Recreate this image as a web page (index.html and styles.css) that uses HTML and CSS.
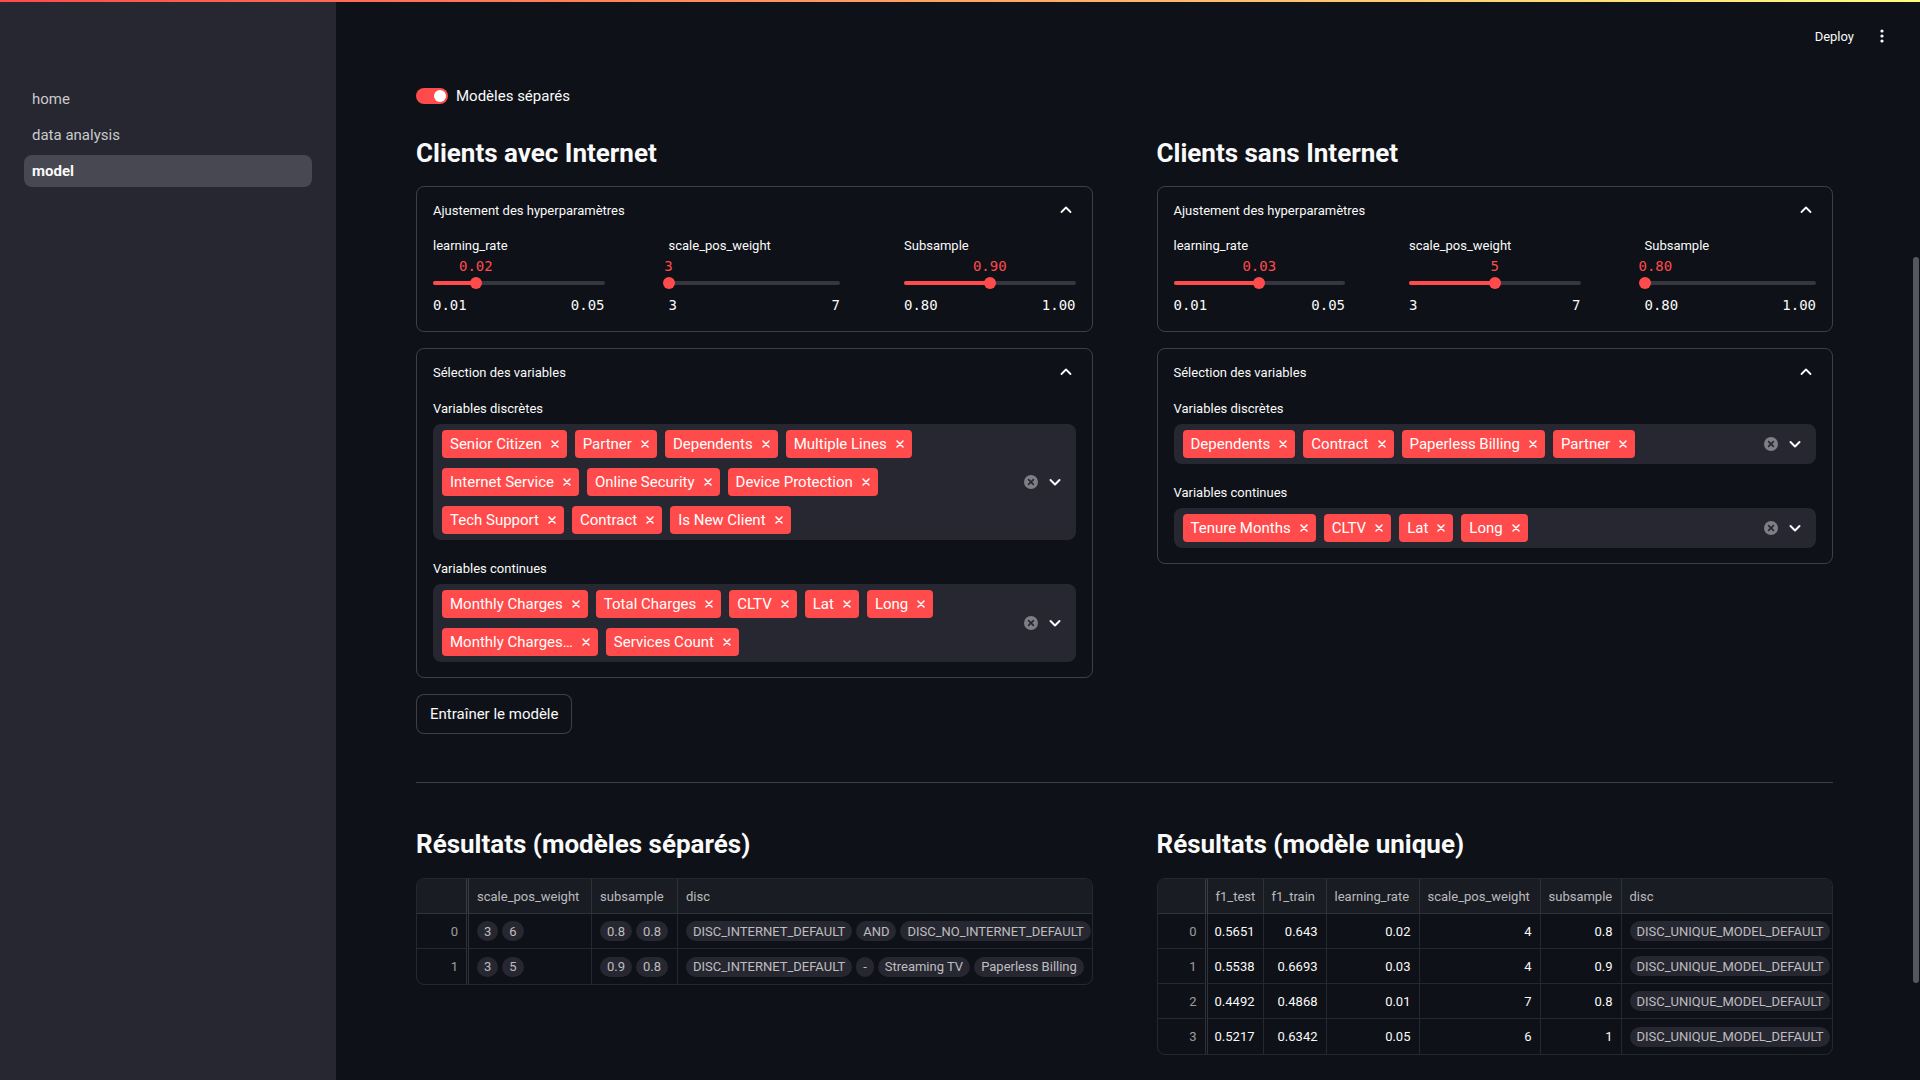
FILE: index.html
```html
<!DOCTYPE html>
<html lang="fr">
<head>
<meta charset="utf-8">
<title>model</title>
<link rel="stylesheet" href="styles.css">
</head>
<body>
<div class="decoration"></div>
<div class="app">
  <aside class="sidebar">
    <nav class="nav">
      <a class="nav-item">home</a>
      <a class="nav-item">data analysis</a>
      <a class="nav-item active">model</a>
    </nav>
  </aside>
  <main class="main">
    <header class="topbar">
      <span class="deploy">Deploy</span>
      <span class="kebab"><svg width="16" height="16" viewBox="0 0 16 16"><circle cx="8" cy="3" r="1.6" fill="#fafafa"/><circle cx="8" cy="8" r="1.6" fill="#fafafa"/><circle cx="8" cy="13" r="1.6" fill="#fafafa"/></svg></span>
    </header>
    <div class="content">
      <div class="toggle-row">
        <span class="toggle"><span class="knob"></span></span>
        <span class="toggle-label">Modèles séparés</span>
      </div>

      <div class="cols top-cols">
        <section class="col">
          <h3 class="subheader">Clients avec Internet</h3>
          <div class="expander">
            <div class="exp-head"><span>Ajustement des hyperparamètres</span><svg class="chev" width="20" height="20" viewBox="0 0 20 20"><polyline points="5.5,12 10,7.5 14.5,12" fill="none" stroke="#fafafa" stroke-width="1.8" stroke-linecap="round" stroke-linejoin="round"/></svg></div>
            <div class="exp-body sliders">
              <div class="slider">
                <div class="slider-label">learning_rate</div>
                <div class="rail">
                  <span class="val" style="left:25%">0.02</span>
                  <div class="track"><div class="fill" style="width:25%"></div></div>
                  <span class="thumb" style="left:25%"></span>
                </div>
                <div class="minmax"><span>0.01</span><span>0.05</span></div>
              </div>
              <div class="slider">
                <div class="slider-label">scale_pos_weight</div>
                <div class="rail">
                  <span class="val" style="left:0%">3</span>
                  <div class="track"><div class="fill" style="width:0%"></div></div>
                  <span class="thumb" style="left:0%"></span>
                </div>
                <div class="minmax"><span>3</span><span>7</span></div>
              </div>
              <div class="slider">
                <div class="slider-label">Subsample</div>
                <div class="rail">
                  <span class="val" style="left:50%">0.90</span>
                  <div class="track"><div class="fill" style="width:50%"></div></div>
                  <span class="thumb" style="left:50%"></span>
                </div>
                <div class="minmax"><span>0.80</span><span>1.00</span></div>
              </div>
            </div>
          </div>

          <div class="expander">
            <div class="exp-head"><span>Sélection des variables</span><svg class="chev" width="20" height="20" viewBox="0 0 20 20"><polyline points="5.5,12 10,7.5 14.5,12" fill="none" stroke="#fafafa" stroke-width="1.8" stroke-linecap="round" stroke-linejoin="round"/></svg></div>
            <div class="exp-body">
              <div class="field-label">Variables discrètes</div>
              <div class="multiselect">
                <div class="tags">
                  <span class="tag">Senior Citizen<svg class="x" viewBox="0 0 8 8"><path d="M1 1L7 7M7 1L1 7"/></svg></span>
                  <span class="tag">Partner<svg class="x" viewBox="0 0 8 8"><path d="M1 1L7 7M7 1L1 7"/></svg></span>
                  <span class="tag">Dependents<svg class="x" viewBox="0 0 8 8"><path d="M1 1L7 7M7 1L1 7"/></svg></span>
                  <span class="tag">Multiple Lines<svg class="x" viewBox="0 0 8 8"><path d="M1 1L7 7M7 1L1 7"/></svg></span>
                  <span class="tag">Internet Service<svg class="x" viewBox="0 0 8 8"><path d="M1 1L7 7M7 1L1 7"/></svg></span>
                  <span class="tag">Online Security<svg class="x" viewBox="0 0 8 8"><path d="M1 1L7 7M7 1L1 7"/></svg></span>
                  <span class="tag">Device Protection<svg class="x" viewBox="0 0 8 8"><path d="M1 1L7 7M7 1L1 7"/></svg></span>
                  <span class="tag">Tech Support<svg class="x" viewBox="0 0 8 8"><path d="M1 1L7 7M7 1L1 7"/></svg></span>
                  <span class="tag">Contract<svg class="x" viewBox="0 0 8 8"><path d="M1 1L7 7M7 1L1 7"/></svg></span>
                  <span class="tag">Is New Client<svg class="x" viewBox="0 0 8 8"><path d="M1 1L7 7M7 1L1 7"/></svg></span>
                </div>
                <div class="ms-icons">
                  <svg class="clear" viewBox="0 0 14 14"><circle cx="7" cy="7" r="7" fill="#7d7e86"/><path d="M4.6 4.6L9.4 9.4M9.4 4.6L4.6 9.4" stroke="#262730" stroke-width="1.6" stroke-linecap="round"/></svg>
                  <svg class="down" viewBox="0 0 14 14"><polyline points="2.5,5 7,9.5 11.5,5" fill="none" stroke="#fafafa" stroke-width="2" stroke-linecap="round" stroke-linejoin="round"/></svg>
                </div>
              </div>
              <div class="field-label second">Variables continues</div>
              <div class="multiselect">
                <div class="tags">
                  <span class="tag">Monthly Charges<svg class="x" viewBox="0 0 8 8"><path d="M1 1L7 7M7 1L1 7"/></svg></span>
                  <span class="tag">Total Charges<svg class="x" viewBox="0 0 8 8"><path d="M1 1L7 7M7 1L1 7"/></svg></span>
                  <span class="tag">CLTV<svg class="x" viewBox="0 0 8 8"><path d="M1 1L7 7M7 1L1 7"/></svg></span>
                  <span class="tag">Lat<svg class="x" viewBox="0 0 8 8"><path d="M1 1L7 7M7 1L1 7"/></svg></span>
                  <span class="tag">Long<svg class="x" viewBox="0 0 8 8"><path d="M1 1L7 7M7 1L1 7"/></svg></span>
                  <span class="tag">Monthly Charges…<svg class="x" viewBox="0 0 8 8"><path d="M1 1L7 7M7 1L1 7"/></svg></span>
                  <span class="tag">Services Count<svg class="x" viewBox="0 0 8 8"><path d="M1 1L7 7M7 1L1 7"/></svg></span>
                </div>
                <div class="ms-icons">
                  <svg class="clear" viewBox="0 0 14 14"><circle cx="7" cy="7" r="7" fill="#7d7e86"/><path d="M4.6 4.6L9.4 9.4M9.4 4.6L4.6 9.4" stroke="#262730" stroke-width="1.6" stroke-linecap="round"/></svg>
                  <svg class="down" viewBox="0 0 14 14"><polyline points="2.5,5 7,9.5 11.5,5" fill="none" stroke="#fafafa" stroke-width="2" stroke-linecap="round" stroke-linejoin="round"/></svg>
                </div>
              </div>
            </div>
          </div>
        </section>

        <section class="col">
          <h3 class="subheader">Clients sans Internet</h3>
          <div class="expander">
            <div class="exp-head"><span>Ajustement des hyperparamètres</span><svg class="chev" width="20" height="20" viewBox="0 0 20 20"><polyline points="5.5,12 10,7.5 14.5,12" fill="none" stroke="#fafafa" stroke-width="1.8" stroke-linecap="round" stroke-linejoin="round"/></svg></div>
            <div class="exp-body sliders">
              <div class="slider">
                <div class="slider-label">learning_rate</div>
                <div class="rail">
                  <span class="val" style="left:50%">0.03</span>
                  <div class="track"><div class="fill" style="width:50%"></div></div>
                  <span class="thumb" style="left:50%"></span>
                </div>
                <div class="minmax"><span>0.01</span><span>0.05</span></div>
              </div>
              <div class="slider">
                <div class="slider-label">scale_pos_weight</div>
                <div class="rail">
                  <span class="val" style="left:50%">5</span>
                  <div class="track"><div class="fill" style="width:50%"></div></div>
                  <span class="thumb" style="left:50%"></span>
                </div>
                <div class="minmax"><span>3</span><span>7</span></div>
              </div>
              <div class="slider">
                <div class="slider-label">Subsample</div>
                <div class="rail">
                  <span class="val val-start" style="left:0%">0.80</span>
                  <div class="track"><div class="fill" style="width:0%"></div></div>
                  <span class="thumb" style="left:0%"></span>
                </div>
                <div class="minmax"><span>0.80</span><span>1.00</span></div>
              </div>
            </div>
          </div>

          <div class="expander">
            <div class="exp-head"><span>Sélection des variables</span><svg class="chev" width="20" height="20" viewBox="0 0 20 20"><polyline points="5.5,12 10,7.5 14.5,12" fill="none" stroke="#fafafa" stroke-width="1.8" stroke-linecap="round" stroke-linejoin="round"/></svg></div>
            <div class="exp-body">
              <div class="field-label">Variables discrètes</div>
              <div class="multiselect">
                <div class="tags">
                  <span class="tag">Dependents<svg class="x" viewBox="0 0 8 8"><path d="M1 1L7 7M7 1L1 7"/></svg></span>
                  <span class="tag">Contract<svg class="x" viewBox="0 0 8 8"><path d="M1 1L7 7M7 1L1 7"/></svg></span>
                  <span class="tag">Paperless Billing<svg class="x" viewBox="0 0 8 8"><path d="M1 1L7 7M7 1L1 7"/></svg></span>
                  <span class="tag">Partner<svg class="x" viewBox="0 0 8 8"><path d="M1 1L7 7M7 1L1 7"/></svg></span>
                </div>
                <div class="ms-icons">
                  <svg class="clear" viewBox="0 0 14 14"><circle cx="7" cy="7" r="7" fill="#7d7e86"/><path d="M4.6 4.6L9.4 9.4M9.4 4.6L4.6 9.4" stroke="#262730" stroke-width="1.6" stroke-linecap="round"/></svg>
                  <svg class="down" viewBox="0 0 14 14"><polyline points="2.5,5 7,9.5 11.5,5" fill="none" stroke="#fafafa" stroke-width="2" stroke-linecap="round" stroke-linejoin="round"/></svg>
                </div>
              </div>
              <div class="field-label second">Variables continues</div>
              <div class="multiselect">
                <div class="tags">
                  <span class="tag">Tenure Months<svg class="x" viewBox="0 0 8 8"><path d="M1 1L7 7M7 1L1 7"/></svg></span>
                  <span class="tag">CLTV<svg class="x" viewBox="0 0 8 8"><path d="M1 1L7 7M7 1L1 7"/></svg></span>
                  <span class="tag">Lat<svg class="x" viewBox="0 0 8 8"><path d="M1 1L7 7M7 1L1 7"/></svg></span>
                  <span class="tag">Long<svg class="x" viewBox="0 0 8 8"><path d="M1 1L7 7M7 1L1 7"/></svg></span>
                </div>
                <div class="ms-icons">
                  <svg class="clear" viewBox="0 0 14 14"><circle cx="7" cy="7" r="7" fill="#7d7e86"/><path d="M4.6 4.6L9.4 9.4M9.4 4.6L4.6 9.4" stroke="#262730" stroke-width="1.6" stroke-linecap="round"/></svg>
                  <svg class="down" viewBox="0 0 14 14"><polyline points="2.5,5 7,9.5 11.5,5" fill="none" stroke="#fafafa" stroke-width="2" stroke-linecap="round" stroke-linejoin="round"/></svg>
                </div>
              </div>
            </div>
          </div>
        </section>
      </div>

      <button class="btn">Entraîner le modèle</button>

      <hr class="divider">

      <div class="cols results">
        <section class="col">
          <h3 class="subheader">Résultats (modèles séparés)</h3>
          <div class="df-wrap">
            <div class="df df-left">
              <div class="cell th idx"></div>
              <div class="cell th">scale_pos_weight</div>
              <div class="cell th">subsample</div>
              <div class="cell th last">disc</div>

              <div class="cell idx">0</div>
              <div class="cell"><span class="pill">3</span><span class="pill">6</span></div>
              <div class="cell"><span class="pill">0.8</span><span class="pill">0.8</span></div>
              <div class="cell last"><span class="pill">DISC_INTERNET_DEFAULT</span><span class="pill">AND</span><span class="pill">DISC_NO_INTERNET_DEFAULT</span></div>

              <div class="cell idx end">1</div>
              <div class="cell end"><span class="pill">3</span><span class="pill">5</span></div>
              <div class="cell end"><span class="pill">0.9</span><span class="pill">0.8</span></div>
              <div class="cell last end"><span class="pill">DISC_INTERNET_DEFAULT</span><span class="pill">-</span><span class="pill">Streaming TV</span><span class="pill">Paperless Billing</span></div>
            </div>
          </div>
        </section>
        <section class="col">
          <h3 class="subheader">Résultats (modèle unique)</h3>
          <div class="df-wrap">
            <div class="df df-right">
              <div class="cell th idx"></div>
              <div class="cell th">f1_test</div>
              <div class="cell th">f1_train</div>
              <div class="cell th">learning_rate</div>
              <div class="cell th">scale_pos_weight</div>
              <div class="cell th">subsample</div>
              <div class="cell th last">disc</div>

              <div class="cell idx">0</div>
              <div class="cell num">0.5651</div>
              <div class="cell num">0.643</div>
              <div class="cell num">0.02</div>
              <div class="cell num">4</div>
              <div class="cell num">0.8</div>
              <div class="cell last"><span class="pill">DISC_UNIQUE_MODEL_DEFAULT</span></div>

              <div class="cell idx">1</div>
              <div class="cell num">0.5538</div>
              <div class="cell num">0.6693</div>
              <div class="cell num">0.03</div>
              <div class="cell num">4</div>
              <div class="cell num">0.9</div>
              <div class="cell last"><span class="pill">DISC_UNIQUE_MODEL_DEFAULT</span></div>

              <div class="cell idx">2</div>
              <div class="cell num">0.4492</div>
              <div class="cell num">0.4868</div>
              <div class="cell num">0.01</div>
              <div class="cell num">7</div>
              <div class="cell num">0.8</div>
              <div class="cell last"><span class="pill">DISC_UNIQUE_MODEL_DEFAULT</span></div>

              <div class="cell idx end">3</div>
              <div class="cell num end">0.5217</div>
              <div class="cell num end">0.6342</div>
              <div class="cell num end">0.05</div>
              <div class="cell num end">6</div>
              <div class="cell num end">1</div>
              <div class="cell last end"><span class="pill">DISC_UNIQUE_MODEL_DEFAULT</span></div>
            </div>
          </div>
        </section>
      </div>
    </div>
    <div class="scrollbar"></div>
  </main>
</div>
</body>
</html>
```

FILE: styles.css
```css
* { box-sizing: border-box; }

html, body {
  margin: 0;
  padding: 0;
  width: 1920px;
  height: 1080px;
  overflow: hidden;
  background: #0e1117;
  color: #fafafa;
  font-family: "Roboto", "Liberation Sans", sans-serif;
}

.decoration {
  position: fixed;
  top: 0;
  left: 0;
  right: 0;
  height: 2px;
  background: linear-gradient(90deg, #ff4b4b, #fffd80);
  z-index: 10;
}

.app {
  display: flex;
  height: 1080px;
}

/* Sidebar */
.sidebar {
  width: 336px;
  flex: none;
  background: #262730;
  padding: 83px 24px 0 24px;
}

.nav {
  display: flex;
  flex-direction: column;
  gap: 4px;
}

.nav-item {
  display: flex;
  align-items: center;
  height: 32px;
  padding: 0 8px;
  border-radius: 8px;
  font-size: 15px;
  color: rgba(250, 250, 250, 0.78);
}

.nav-item.active {
  background: #474851;
  color: #fafafa;
  font-weight: 700;
}

/* Main */
.main {
  flex: 1;
  position: relative;
  overflow: hidden;
}

.topbar {
  height: 72px;
  display: flex;
  justify-content: flex-end;
  align-items: center;
  gap: 20px;
  padding-right: 30px;
}

.deploy {
  font-size: 13px;
  font-weight: 400;
  color: #fafafa;
}

.kebab {
  display: flex;
  width: 16px;
  height: 16px;
}

.content {
  padding: 0 87px 0 80px;
  display: flex;
  flex-direction: column;
  align-items: flex-start;
}

.toggle-row {
  margin-top: 12px;
  height: 24px;
  display: flex;
  align-items: center;
  gap: 8px;
}

.toggle {
  width: 32px;
  height: 16px;
  border-radius: 8px;
  background: #ff4b4b;
  display: flex;
  align-items: center;
  justify-content: flex-end;
  padding-right: 2px;
}

.knob {
  width: 12px;
  height: 12px;
  border-radius: 50%;
  background: #ffffff;
}

.toggle-label {
  font-size: 15px;
}

.cols {
  width: 100%;
  display: grid;
  grid-template-columns: 1fr 1fr;
  column-gap: 64px;
  align-items: start;
}

.top-cols { margin-top: 25px; }

.col {
  display: flex;
  flex-direction: column;
  min-width: 0;
}

.subheader {
  margin: 0 0 13px 0;
  height: 40px;
  line-height: 40px;
  font-size: 26px;
  font-weight: 700;
  white-space: nowrap;
}

/* Expander */
.expander {
  border: 1px solid rgba(250, 250, 250, 0.2);
  border-radius: 8px;
}

.expander + .expander { margin-top: 16px; }

.exp-head {
  height: 46px;
  padding: 0 16px;
  display: flex;
  align-items: center;
  justify-content: space-between;
  font-size: 13px;
}

.exp-body {
  padding: 3px 16px 15px 16px;
}

.exp-body.sliders {
  padding-top: 3px;
  padding-bottom: 16px;
}

.sliders {
  display: grid;
  grid-template-columns: repeat(3, 1fr);
  column-gap: 64px;
}

.slider-label {
  height: 20px;
  line-height: 20px;
  font-size: 13px;
}

.rail {
  position: relative;
  height: 33px;
}

.val {
  position: absolute;
  top: 0;
  line-height: 20px;
  font-family: "DejaVu Sans Mono", "Liberation Mono", monospace;
  font-size: 14px;
  color: #ff4b4b;
  transform: translateX(-50%);
  white-space: nowrap;
}

.val.val-start { transform: translateX(-6px); }

.track {
  position: absolute;
  top: 25px;
  left: 0;
  right: 0;
  height: 4px;
  border-radius: 2px;
  background: #35363e;
  overflow: hidden;
}

.fill {
  height: 100%;
  background: #ff4b4b;
}

.thumb {
  position: absolute;
  top: 21px;
  width: 12px;
  height: 12px;
  margin-left: -6px;
  border-radius: 50%;
  background: #ff4b4b;
}

.minmax {
  margin-top: 6px;
  height: 20px;
  line-height: 20px;
  display: flex;
  justify-content: space-between;
  font-family: "DejaVu Sans Mono", "Liberation Mono", monospace;
  font-size: 14px;
  color: #fafafa;
}

/* Multiselect */
.field-label {
  height: 22px;
  line-height: 22px;
  font-size: 13px;
  margin-bottom: 4px;
}

.field-label.second { margin-top: 18px; }

.multiselect {
  background: #262730;
  border-radius: 8px;
  display: flex;
  align-items: center;
}

.tags {
  flex: 1;
  min-width: 0;
  display: flex;
  flex-wrap: wrap;
  gap: 10px 8px;
  padding: 6px 0 6px 9px;
}

.tag {
  display: inline-flex;
  align-items: center;
  gap: 9px;
  height: 28px;
  padding: 0 8px;
  border-radius: 4px;
  background: #ff4b4b;
  color: #ffffff;
  font-size: 15px;
  white-space: nowrap;
}

.tag .x {
  width: 8px;
  height: 8px;
  stroke: #ffffff;
  stroke-width: 1.5;
  stroke-linecap: round;
  fill: none;
}

.ms-icons {
  flex: none;
  display: flex;
  align-items: center;
  gap: 10px;
  padding: 0 14px 0 30px;
}

.ms-icons .clear,
.ms-icons .down {
  width: 14px;
  height: 14px;
}

/* Button */
.btn {
  margin-top: 16px;
  height: 40px;
  padding: 0 13px;
  border: 1px solid rgba(250, 250, 250, 0.2);
  border-radius: 8px;
  background: #0e1117;
  color: #fafafa;
  font-family: "Roboto", "Liberation Sans", sans-serif;
  font-size: 15px;
}

.divider {
  width: 100%;
  margin: 48px 0 0 0;
  border: none;
  height: 1px;
  background: rgba(250, 250, 250, 0.2);
}

.results { margin-top: 41px; }

.results .subheader { margin-bottom: 14px; }

/* Data frames */
.df-wrap {
  border: 1px solid rgba(250, 250, 250, 0.1);
  border-radius: 8px;
  overflow: hidden;
}

.df {
  display: grid;
  font-size: 13px;
}

.df-left { grid-template-columns: 52px 123px 86px 1fr; }
.df-right { grid-template-columns: 50px 56px 63px 93px 121px 81px 1fr; }

.cell {
  height: 35px;
  display: flex;
  align-items: center;
  gap: 4px;
  padding: 0 8px;
  border-bottom: 1px solid rgba(250, 250, 250, 0.1);
  border-right: 1px solid rgba(250, 250, 250, 0.1);
  white-space: nowrap;
  overflow: hidden;
  color: #fafafa;
}

.cell.th {
  background: #1a1c23;
  color: rgba(250, 250, 250, 0.72);
}

.cell.last { border-right: none; }
.cell.end { border-bottom: none; }

.cell.idx {
  justify-content: flex-end;
  color: rgba(250, 250, 250, 0.6);
  border-right: 3px double rgba(250, 250, 250, 0.14);
}

.cell.num { justify-content: flex-end; }

.pill {
  flex: none;
  display: inline-flex;
  align-items: center;
  height: 20px;
  padding: 0 7px;
  border-radius: 10px;
  background: #262730;
  color: rgba(250, 250, 250, 0.72);
  font-size: 13px;
}

.scrollbar {
  position: absolute;
  right: 1px;
  top: 257px;
  width: 6px;
  height: 726px;
  border-radius: 3px;
  background: #55575e;
}
```
